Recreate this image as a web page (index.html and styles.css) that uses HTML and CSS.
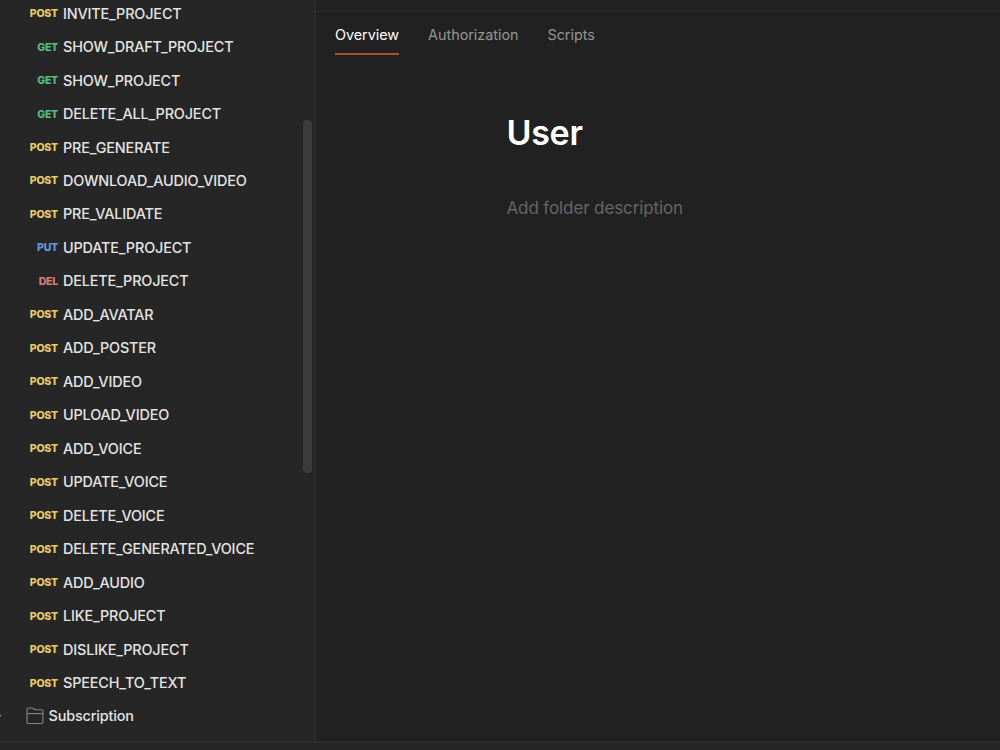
FILE: index.html
```html
<!DOCTYPE html>
<html lang="en">
<head>
  <meta charset="UTF-8">
  <title>User</title>
  <link rel="stylesheet" href="styles.css">
</head>
<body>
  <div class="workspace">
    <aside class="sidebar">
      <ul class="requests">
        <li><span class="method post">POST</span><span class="name">INVITE_PROJECT</span></li>
        <li><span class="method get">GET</span><span class="name">SHOW_DRAFT_PROJECT</span></li>
        <li><span class="method get">GET</span><span class="name">SHOW_PROJECT</span></li>
        <li><span class="method get">GET</span><span class="name">DELETE_ALL_PROJECT</span></li>
        <li><span class="method post">POST</span><span class="name">PRE_GENERATE</span></li>
        <li><span class="method post">POST</span><span class="name">DOWNLOAD_AUDIO_VIDEO</span></li>
        <li><span class="method post">POST</span><span class="name">PRE_VALIDATE</span></li>
        <li><span class="method put">PUT</span><span class="name">UPDATE_PROJECT</span></li>
        <li><span class="method del">DEL</span><span class="name">DELETE_PROJECT</span></li>
        <li><span class="method post">POST</span><span class="name">ADD_AVATAR</span></li>
        <li><span class="method post">POST</span><span class="name">ADD_POSTER</span></li>
        <li><span class="method post">POST</span><span class="name">ADD_VIDEO</span></li>
        <li><span class="method post">POST</span><span class="name">UPLOAD_VIDEO</span></li>
        <li><span class="method post">POST</span><span class="name">ADD_VOICE</span></li>
        <li><span class="method post">POST</span><span class="name">UPDATE_VOICE</span></li>
        <li><span class="method post">POST</span><span class="name">DELETE_VOICE</span></li>
        <li><span class="method post">POST</span><span class="name">DELETE_GENERATED_VOICE</span></li>
        <li><span class="method post">POST</span><span class="name">ADD_AUDIO</span></li>
        <li><span class="method post">POST</span><span class="name">LIKE_PROJECT</span></li>
        <li><span class="method post">POST</span><span class="name">DISLIKE_PROJECT</span></li>
        <li><span class="method post">POST</span><span class="name">SPEECH_TO_TEXT</span></li>
        <li class="folder">
          <svg class="arrow" width="2" height="4" viewBox="0 0 2 4"><path d="M0 1h1.5L0 3z" fill="#a0a0a0"/></svg>
          <svg class="folder-icon" width="18" height="18" viewBox="0 0 18 18" fill="none" stroke="#858585" stroke-width="1.1">
            <path d="M1 15.3V2.2Q1 1 2.2 1H6.2Q6.8 1 7.3 1.5L8.7 2.8H15.7Q16.9 2.8 16.9 4V15.3Q16.9 16.5 15.7 16.5H2.2Q1 16.5 1 15.3Z"/>
            <path d="M1 6.6H16.9"/>
          </svg>
          <span class="name">Subscription</span>
        </li>
      </ul>
      <div class="scrollbar"></div>
    </aside>
    <main class="content">
      <div class="topbar"></div>
      <nav class="tabs">
        <a class="tab active">Overview</a>
        <a class="tab">Authorization</a>
        <a class="tab">Scripts</a>
      </nav>
      <section class="overview">
        <h1>User</h1>
        <p>Add folder description</p>
      </section>
    </main>
  </div>
  <footer class="statusbar"></footer>
</body>
</html>
```

FILE: styles.css
```css
* {
  box-sizing: border-box;
}

body {
  margin: 0;
  height: 100vh;
  display: flex;
  flex-direction: column;
  overflow: hidden;
  background: #212121;
  color: #fff;
  font-family: Inter, sans-serif;
}

.workspace {
  flex: 1;
  display: flex;
  min-height: 0;
}

.sidebar {
  width: 316px;
  display: flex;
  background: #262626;
  border-right: 1px solid #303030;
}

.requests {
  flex: 1;
  margin: -3.6px 0 0;
  padding: 0;
  list-style: none;
}

.requests li {
  display: flex;
  align-items: center;
  height: 33.48px;
}

.method {
  width: 58px;
  margin-right: 5px;
  padding-top: 1px;
  text-align: right;
  font-size: 10.5px;
  font-weight: 800;
  letter-spacing: -0.2px;
}

.post { color: #e6cc6a; }
.get { color: #58bd86; }
.put { color: #659bdf; }
.del { color: #d97d72; }

.name {
  color: #e4e4e4;
  font-size: 14.4px;
  font-weight: 500;
  letter-spacing: -0.15px;
  white-space: nowrap;
}

.folder-icon {
  margin: 1px 5px 0 23.6px;
}

.scrollbar {
  width: 9px;
  height: 353px;
  margin: 120px 3px 0 0;
  border-radius: 4px;
  background: #3b3b3b;
}

.content {
  flex: 1;
}

.topbar {
  height: 12px;
  border-bottom: 1px solid #2c2c2c;
}

.tabs {
  display: flex;
  gap: 29px;
  padding-left: 19px;
}

.tab {
  height: 43px;
  padding-top: 14px;
  color: #959595;
  font-size: 14.4px;
  letter-spacing: -0.03px;
  line-height: 18px;
}

.tab.active {
  color: #fff;
  border-bottom: 2px solid #a94e2e;
}

.overview {
  padding: 57px 0 0 190.5px;
}

.overview h1 {
  margin: 0;
  font-size: 34px;
  font-weight: 600;
  letter-spacing: -0.3px;
  line-height: 42px;
}

.overview p {
  margin: 42px 0 0;
  color: #666;
  font-size: 17px;
  letter-spacing: -0.12px;
  line-height: 24px;
}

.statusbar {
  height: 9px;
  background: #262626;
  border-top: 2px solid #2c2c2c;
}
```
